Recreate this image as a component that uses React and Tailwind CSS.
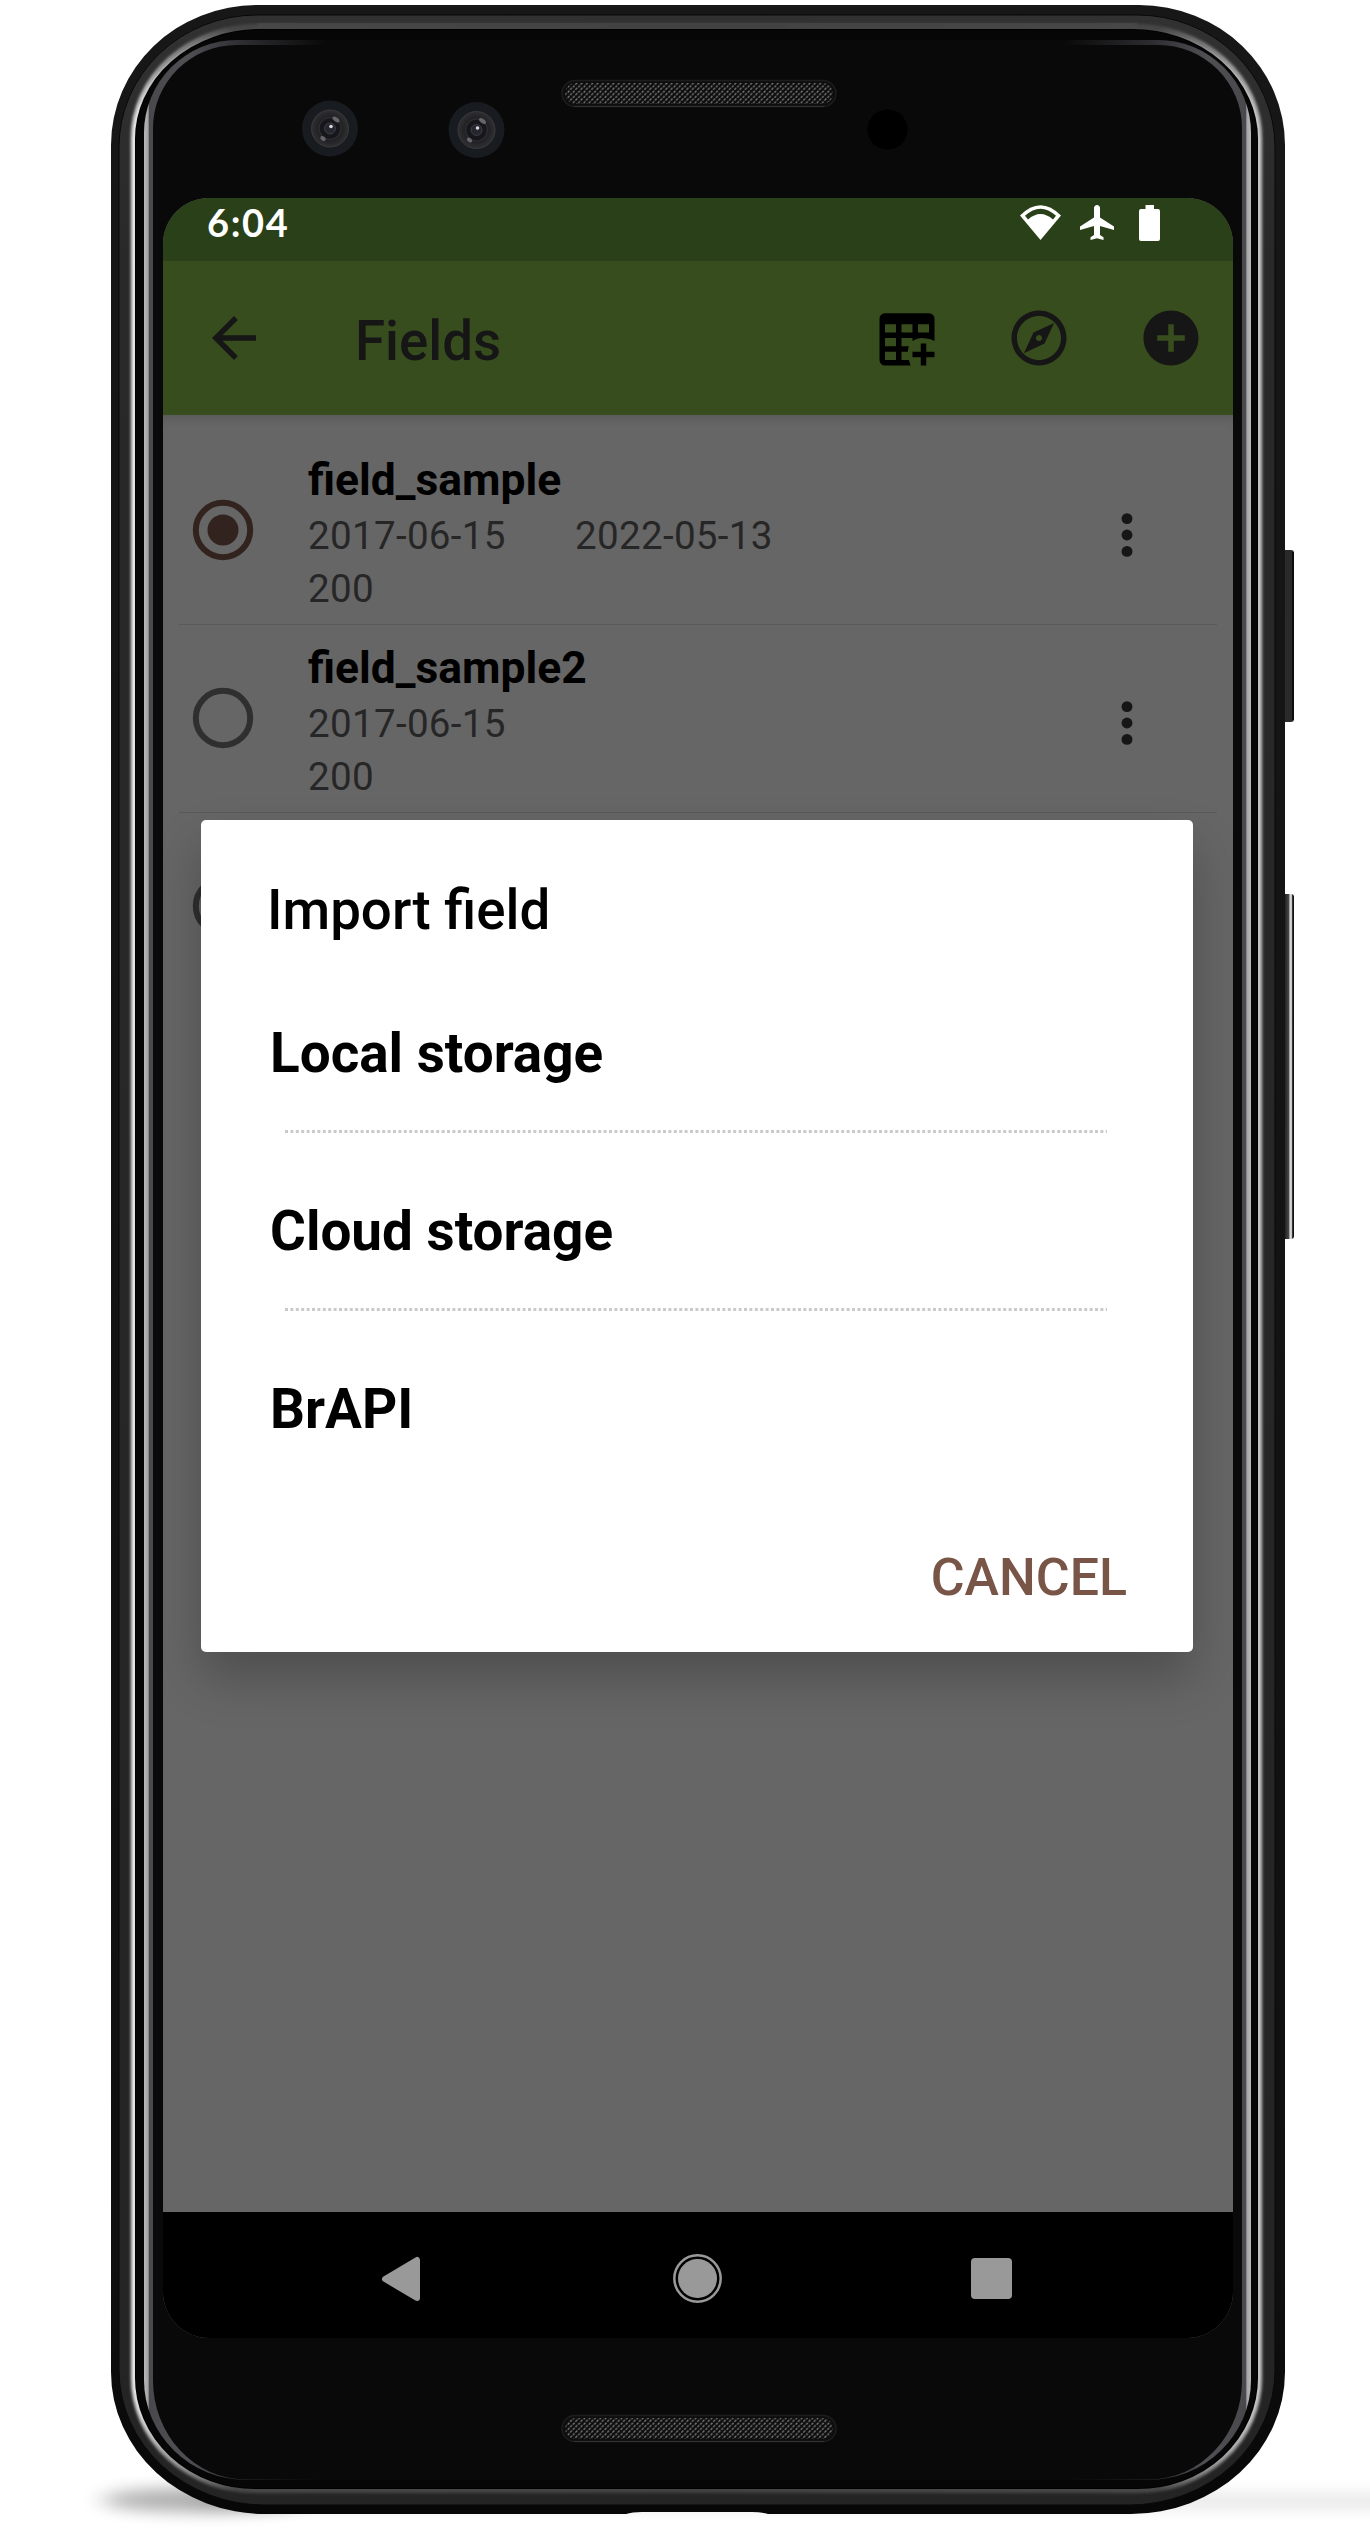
import React from "react";

function Speaker({ x, y }) {
  return (
    <g>
      <rect x={x} y={y} width="274" height="26" rx="13" fill="#0e0e0e" stroke="#1d1d1d" strokeWidth="1.5" />
      <path d={`M${x + 12} ${y + 26}H${x + 262}`} stroke="#333" strokeWidth="1" />
      <rect x={x + 3} y={y + 2.5} width="268" height="21" rx="10.5" fill="url(#mesh)" />
    </g>
  );
}

function Camera({ cx, cy }) {
  return (
    <g>
      <circle cx={cx} cy={cy} r="28" fill="#181c21" />
      <circle cx={cx} cy={cy} r="18.5" fill="url(#lens)" stroke="#39393c" strokeWidth="1" />
      <circle cx={cx} cy={cy} r="11" fill="#17171b" stroke="#2c2c30" strokeWidth="1.5" />
      <circle cx={cx} cy={cy} r="5.5" fill="#26262f" stroke="#3d3d48" strokeWidth="1" />
      <circle cx={cx + 1} cy={cy - 2} r="1.8" fill="#d8d8dc" />
      <ellipse cx={cx + 6} cy={cy - 9} rx="4" ry="2" fill="#66666a" transform={`rotate(35 ${cx + 6} ${cy - 9})`} />
      <ellipse cx={cx - 7} cy={cy + 10} rx="3" ry="2" fill="#66666a" transform={`rotate(35 ${cx - 7} ${cy + 10})`} />
    </g>
  );
}

function DeviceFrame() {
  return (
    <svg className="absolute inset-0" width="1370" height="2534" viewBox="0 0 1370 2534" fill="none" aria-hidden="true">
      <defs>
        <pattern id="mesh" width="5.3" height="5.3" patternUnits="userSpaceOnUse">
          <path d="M0.6 2.4L2.2 0.6M3 5L4.8 3.1" stroke="#7c7c7c" strokeWidth="1.3" />
        </pattern>
        <radialGradient id="lens">
          <stop offset="0.5" stopColor="#1b1b1e" />
          <stop offset="1" stopColor="#303033" />
        </radialGradient>
        <linearGradient id="edge" gradientUnits="userSpaceOnUse" x1="0" y1="5" x2="0" y2="2514">
          <stop offset="0" stopColor="#171717" />
          <stop offset="0.9" stopColor="#101010" />
          <stop offset="1" stopColor="#070707" />
        </linearGradient>
        <linearGradient id="band" gradientUnits="userSpaceOnUse" x1="0" y1="15" x2="0" y2="2505">
          <stop offset="0" stopColor="#313131" />
          <stop offset="0.1" stopColor="#292929" />
          <stop offset="1" stopColor="#242424" />
        </linearGradient>
        <linearGradient id="rim" gradientUnits="userSpaceOnUse" x1="133" y1="0" x2="1260" y2="0">
          <stop offset="0" stopColor="#e6e6e6" />
          <stop offset="0.025" stopColor="#aaa" />
          <stop offset="0.09" stopColor="#484848" />
          <stop offset="0.5" stopColor="#424242" />
          <stop offset="0.91" stopColor="#484848" />
          <stop offset="0.975" stopColor="#aaa" />
          <stop offset="1" stopColor="#c4c4c4" />
        </linearGradient>
        <linearGradient id="glass" gradientUnits="userSpaceOnUse" x1="144" y1="0" x2="1251" y2="0">
          <stop offset="0" stopColor="#b8b8b9" />
          <stop offset="0.0036" stopColor="#a5a5a7" />
          <stop offset="0.005" stopColor="#49484d" />
          <stop offset="0.04" stopColor="#504f54" />
          <stop offset="0.09" stopColor="#2d2d31" />
          <stop offset="0.165" stopColor="#090909" />
          <stop offset="0.83" stopColor="#090909" />
          <stop offset="0.91" stopColor="#2d2d31" />
          <stop offset="0.96" stopColor="#504f54" />
          <stop offset="0.995" stopColor="#49484d" />
          <stop offset="0.9964" stopColor="#a5a5a7" />
          <stop offset="1" stopColor="#b8b8b9" />
        </linearGradient>
        <linearGradient id="volume" gradientUnits="userSpaceOnUse" x1="1283" y1="0" x2="1294" y2="0">
          <stop offset="0" stopColor="#111" />
          <stop offset="0.5" stopColor="#444" />
          <stop offset="0.65" stopColor="#dcdcdc" />
          <stop offset="0.8" stopColor="#c0c0c0" />
          <stop offset="0.88" stopColor="#111" />
        </linearGradient>
        <filter id="soft" x="-20%" y="-200%" width="140%" height="500%">
          <feGaussianBlur stdDeviation="12 8" />
        </filter>
        <filter id="glow" filterUnits="userSpaceOnUse" x="0" y="0" width="1370" height="2534">
          <feGaussianBlur stdDeviation="1.4" />
        </filter>
      </defs>

      <ellipse cx="202" cy="2500" rx="100" ry="12" fill="#000" opacity="0.32" filter="url(#soft)" />
      <rect x="200" y="2494" width="1240" height="14" fill="#000" opacity="0.1" filter="url(#soft)" />

      <rect x="1282" y="550" width="12" height="172" rx="3" fill="#2a2a2a" />
      <rect x="1292" y="552" width="2" height="168" fill="#0c0c0c" />
      <rect x="1282" y="894" width="12" height="345" rx="3" fill="url(#volume)" />

      <path d="M111 145A146 140 0 0 1 257 5H1139A146 140 0 0 1 1285 145V2372A154 142 0 0 1 1131 2514H768Q762 2512 752 2512H642Q632 2512 626 2514H265A154 142 0 0 1 111 2372Z" fill="url(#edge)" />
      <path d="M119 147A138 132 0 0 1 257 15H1137A138 132 0 0 1 1275 147V2370A146 135 0 0 1 1129 2505H265A146 135 0 0 1 119 2370Z" fill="url(#band)" stroke="#090909" strokeWidth="1" />
      <path d="M257 25.5H1137" stroke="#434343" strokeWidth="5" />
      <path d="M133 138A126 112 0 0 1 259 26H1134A126 112 0 0 1 1260 138V2378A122 113 0 0 1 1138 2491H255A122 113 0 0 1 133 2378Z" stroke="url(#rim)" strokeWidth="4" filter="url(#glow)" />
      <path d="M134 139A126 111 0 0 1 260 28H1133A126 111 0 0 1 1259 139V2378A121 112 0 0 1 1138 2490H255A121 112 0 0 1 134 2378Z" stroke="url(#rim)" strokeWidth="2" fill="#000" />
      <path d="M136 139A124 109 0 0 1 260 30H1133A124 109 0 0 1 1257 139V2378A119 110 0 0 1 1138 2488H255A119 110 0 0 1 136 2378Z" fill="#060606" />
      <path d="M144 133A93 93 0 0 1 237 40H1158A93 93 0 0 1 1251 133V2380A103 100 0 0 1 1148 2480H247A103 100 0 0 1 144 2380Z" fill="url(#glass)" />
      <path d="M153 128A84 83 0 0 1 237 45H1158A84 83 0 0 1 1242 128V2380A93 99 0 0 1 1149 2479.500H246A93 99 0 0 1 153 2380Z" fill="#090909" />

      <Camera cx={330} cy={128.5} />
      <Camera cx={476.5} cy={130} />
      <circle cx="887.5" cy="129.5" r="20" fill="#000" />
      <Speaker x={562} y={80.5} />
      <Speaker x={562} y={2415.5} />
    </svg>
  );
}

function StatusBar() {
  return (
    <div className="flex h-[63px] items-start bg-[#2a4018] pl-[44px] font-['Lato'] text-white">
      <span className="w-[813px] text-[38px] font-bold leading-[49px] tracking-[1.600px]">6:04</span>
      <div className="flex pt-[7px]">
        <svg width="41" height="35" viewBox="0 0 41 35" fill="none">
          <path d="M20.5 35L0 10.5Q20.5 -10 41 10.5Z" fill="#fff" />
          <path d="M5 10.8Q20.5 -3.500 36 10.800L33 14.400Q20.500 3.400 8 14.400Z" fill="#2a4018" />
        </svg>
        <svg className="ml-[19px]" width="34" height="35" viewBox="0 0 34 35">
          <path d="M17 0C15.400 0 14 1.400 14 3V12.500L0 21.500V25L14 21V30L10.500 32.300V35L17 33.300L23.500 35V32.300L20 30V21L34 25V21.500L20 12.500V3C20 1.400 18.600 0 17 0Z" fill="#fff" />
        </svg>
        <svg className="ml-[25px]" width="21" height="36" viewBox="0 0 21 36">
          <path d="M6.500 0H15V4H19Q21 4 21 6V34Q21 36 19 36H2Q0 36 0 34V6Q0 4 2 4H6.500Z" fill="#fff" />
        </svg>
      </div>
    </div>
  );
}

function Toolbar() {
  return (
    <header className="flex h-[154px] items-center bg-[#384d1e] pl-[38px] text-[#161616]">
      <svg width="66" height="66" viewBox="0 0 24 24" fill="currentColor">
        <path d="M20 11H7.830l5.590-5.590L12 4l-8 8 8 8 1.410-1.410L7.830 13H20v-2z" />
      </svg>
      <h1 className="ml-[88px] w-[519px] pt-[5px] text-[54.700px] font-medium leading-[64px]">Fields</h1>
      <svg width="66" height="66" viewBox="0 0 24 24" fill="#000">
        <path fillRule="evenodd" d="M4 3H20A2 2 0 0 1 22 5V13.100A6 6 0 0 0 19 12.200A6 6 0 0 0 14 13.100V12H10V15H12.700A6 6 0 0 0 12.300 17H10V20H12.700L13.300 22H4A2 2 0 0 1 2 20V5A2 2 0 0 1 4 3ZM4 7V10H8V7ZM10 7V10H14V7ZM16 7V10H20V7ZM4 12V15H8V12ZM4 17V20H8V17Z" />
        <path d="M17 14h2v3h3v2h-3v3h-2v-3h-3v-2h3z" />
      </svg>
      <svg className="ml-[66px]" width="66" height="66" viewBox="0 0 24 24" fill="currentColor">
        <path d="M12 2C6.480 2 2 6.480 2 12s4.480 10 10 10 10-4.480 10-10S17.520 2 12 2zm0 18c-4.410 0-8-3.590-8-8s3.590-8 8-8 8 3.590 8 8-3.590 8-8 8zm-5.500-2.500l7.510-3.490L17.500 6.500 9.990 9.990 6.500 17.500zm5.500-6.600c.61 0 1.100.49 1.100 1.100s-.49 1.100-1.100 1.100-1.100-.49-1.100-1.100.49-1.100 1.100-1.100z" />
      </svg>
      <svg className="ml-[66px]" width="66" height="66" viewBox="0 0 24 24" fill="currentColor">
        <path d="M12 2C6.480 2 2 6.480 2 12s4.480 10 10 10 10-4.480 10-10S17.520 2 12 2zm5 11h-4v4h-2v-4H7v-2h4V7h2v4h4v2z" />
      </svg>
    </header>
  );
}

function FieldRow({ name, imported, edited, count, selected }) {
  return (
    <div className="flex h-[188px] border-b border-[#5a5a5a] pl-[13px] last:border-b-0">
      <svg className="mt-[62px]" width="62" height="62" viewBox="0 0 62 62" fill="none">
        <circle cx="31" cy="31" r="27.200" stroke={selected ? "#33231e" : "#2f2f2f"} strokeWidth="6" />
        {selected && <circle cx="31" cy="31" r="15.500" fill="#33231e" />}
      </svg>
      <div className="ml-[54px] w-[804px] pt-[16px] text-[38.600px] leading-[53px] tracking-[0.3px] text-[#262626]">
        <div className="text-[44.400px] font-bold leading-[55px] tracking-normal text-black">{name}</div>
        <div className="mt-[1px] flex">
          <span className="w-[267px]">{imported}</span>
          <span>{edited}</span>
        </div>
        <div>{count}</div>
      </div>
      <svg className="mt-[73px]" width="30" height="50" viewBox="0 0 30 50" fill="#161616">
        <circle cx="15" cy="8.600" r="5.450" />
        <circle cx="15" cy="25" r="5.450" />
        <circle cx="15" cy="41.400" r="5.450" />
      </svg>
    </div>
  );
}

const importSources = ["Local storage", "Cloud storage", "BrAPI"];

function ImportDialog() {
  return (
    <div
      role="dialog"
      className="absolute left-[38px] top-[622px] flex h-[832px] w-[992px] flex-col rounded-[5px] bg-white pl-[66px] pt-[58px] text-black shadow-[0_26px_50px_rgba(0,0,0,0.24)]"
    >
      <h2 className="text-[54.700px] font-medium leading-[64px]">Import field</h2>
      <ul className="mt-[13px] text-[54.850px] font-bold">
        {importSources.map((source, i) => (
          <li key={source} className="h-[178px] pl-[3px] pt-[66px]">
            <div className="leading-[64px]">{source}</div>
            {i < importSources.length - 1 && (
              <svg className="ml-[15px] mt-[45px] block" width="822" height="3">
                <path d="M0 1.500H822" stroke="#cacaca" strokeWidth="3" strokeDasharray="3 2.400" />
              </svg>
            )}
          </li>
        ))}
      </ul>
      <button className="mr-[66px] mt-[59px] self-end text-[51.900px] font-medium leading-[60px] text-[#795548]">CANCEL</button>
    </div>
  );
}

function NavigationBar() {
  return (
    <nav className="flex h-[126px] items-center bg-black pl-[218px] pt-[7px]">
      <svg width="40" height="46" viewBox="0 0 40 46" fill="#999" stroke="#999" strokeWidth="6" strokeLinejoin="round">
        <path d="M4 23L36 4V42Z" />
      </svg>
      <svg className="ml-[251px]" width="51" height="51" viewBox="0 0 51 51" fill="none">
        <circle cx="25.500" cy="25.500" r="23.200" stroke="#999" strokeWidth="2.500" />
        <circle cx="25.500" cy="25.500" r="19.500" fill="#999" />
      </svg>
      <div className="ml-[248px] h-[41px] w-[41px] rounded-[4px] bg-[#999]" />
    </nav>
  );
}

export default function App() {
  return (
    <div className="relative h-[2534px] w-[1370px] overflow-hidden bg-white pl-[163px] pt-[198px] font-['Roboto',sans-serif]">
      <DeviceFrame />
      <main className="relative flex h-[2140px] w-[1070px] flex-col overflow-hidden rounded-[46px] bg-[#666]">
        <StatusBar />
        <Toolbar />
        <section className="flex-1 px-[16px] pt-[22px] shadow-[inset_0_10px_10px_-6px_rgba(0,0,0,0.12)]">
          <FieldRow name="field_sample" imported="2017-06-15" edited="2022-05-13" count="200" selected />
          <FieldRow name="field_sample2" imported="2017-06-15" count="200" />
          <FieldRow />
        </section>
        <NavigationBar />
        <ImportDialog />
      </main>
    </div>
  );
}
